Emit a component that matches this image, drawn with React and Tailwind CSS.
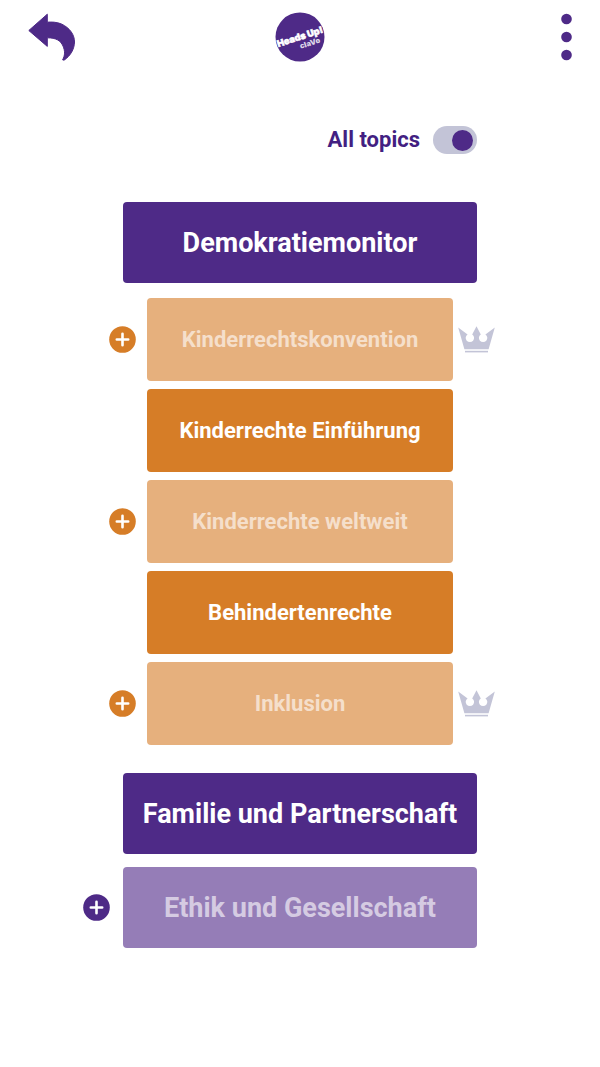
const topics = [
  {
    title: "Demokratiemonitor",
    children: [
      { title: "Kinderrechtskonvention", locked: true, premium: true },
      { title: "Kinderrechte Einführung" },
      { title: "Kinderrechte weltweit", locked: true },
      { title: "Behindertenrechte" },
      { title: "Inklusion", locked: true, premium: true },
    ],
  },
  { title: "Familie und Partnerschaft" },
  { title: "Ethik und Gesellschaft", locked: true },
];

function BackIcon() {
  return (
    <svg viewBox="0 0 48 48" className="size-12" fill="#4e2a87" aria-hidden="true">
      <path
        d="M.8 17.500 19.300 1.200V9.200C23 8.800 29 9 33.500 11 42 15 46.600 22 46.500 29 46.400 36 42.500 43 36 47.200L34.600 46.800C37 42.500 37.200 38 35 33 32.500 27.500 28 24.800 19.300 24.800V33.400Z"
        stroke="#4e2a87"
        strokeWidth="1"
        strokeLinejoin="round"
      />
    </svg>
  );
}

function Logo() {
  return (
    <svg viewBox="0 0 50 50" className="size-[50px]" role="img" aria-label="Heads Up! claVo">
      <circle cx="25" cy="25" r="24.500" fill="#4e2a87" />
      <g transform="rotate(-18 25 25)" fill="#fff" fontFamily="Inter, sans-serif" fontWeight="900">
        <text x="25" y="28" fontSize="9.300" textAnchor="middle" stroke="#fff" strokeWidth=".5">
          Heads Up!
        </text>
        <text x="32.500" y="36.500" fontSize="7.500" textAnchor="middle" fill="#dcd4e7">
          claVo
        </text>
      </g>
    </svg>
  );
}

function MenuIcon() {
  return (
    <svg viewBox="0 0 12 48" className="h-12 w-3" fill="#4e2a87" aria-hidden="true">
      <circle cx="6.500" cy="6" r="5.300" />
      <circle cx="6.500" cy="24" r="5.300" />
      <circle cx="6.500" cy="42" r="5.300" />
    </svg>
  );
}

function PlusIcon() {
  return (
    <svg viewBox="0 0 27 27" className="size-[27px]" aria-hidden="true">
      <circle cx="13.500" cy="13.500" r="13.300" fill="currentColor" />
      <path d="M13.500 7.800v11.400M7.800 13.500h11.400" stroke="#fff" strokeWidth="2.600" strokeLinecap="round" />
    </svg>
  );
}

function CrownIcon() {
  return (
    <svg viewBox="0 0 37 27" className="h-[27px] w-[37px] shrink-0" fill="#c3c4d7" role="img" aria-label="Premium">
      <path d="M.2 1.500 9.600 8.400A4.200 4.200 0 1 0 14.200 8.400L18.500.2 22.800 8.400A4.200 4.200 0 1 0 27.400 8.400L36.800 1.500 30.600 23.200H6.400Z" />
      <path d="M7 24.800h23v1.600H7z" />
    </svg>
  );
}

function AddButton({ title, className }) {
  return (
    <button type="button" aria-label={`Add ${title}`} className={`shrink-0 rounded-full ${className}`}>
      <PlusIcon />
    </button>
  );
}

function SubTopic({ title, locked, premium }) {
  return (
    <li className="grid grid-cols-[1fr_51%_1fr] items-center">
      <div className="flex justify-end pr-[11px]">
        {locked && <AddButton title={title} className="text-[#d67d27]" />}
      </div>
      <button
        type="button"
        className={`min-h-[83px] rounded-[4px] px-2 text-[22px] leading-7 font-bold ${
          locked ? "bg-[#e6b07d] text-[#f5dfcb]" : "bg-[#d67d27] text-white"
        }`}
      >
        {title}
      </button>
      <div className="pl-[5px]">{premium && <CrownIcon />}</div>
    </li>
  );
}

function Topic({ title, locked, children }) {
  return (
    <li>
      <div className="grid grid-cols-[1fr_59%_1fr] items-center">
        <div className="flex justify-end pr-[13px]">
          {locked && <AddButton title={title} className="text-[#4e2a87]" />}
        </div>
        <button
          type="button"
          className={`min-h-[81px] rounded-[4px] px-2 text-[27px] leading-8 font-bold ${
            locked ? "bg-[#957db7] text-[#d5cbe2]" : "bg-[#4e2a87] text-white"
          }`}
        >
          {title}
        </button>
      </div>
      {children && (
        <ul className="my-[15px] flex flex-col gap-2">
          {children.map((child) => (
            <SubTopic key={child.title} {...child} />
          ))}
        </ul>
      )}
    </li>
  );
}

export default function App() {
  return (
    <div className="min-h-screen bg-white font-[Roboto,sans-serif]">
      <header className="grid grid-cols-3 items-center px-7 pt-3">
        <button type="button" aria-label="Back" className="justify-self-start">
          <BackIcon />
        </button>
        <div className="justify-self-center">
          <Logo />
        </div>
        <button type="button" aria-label="Menu" className="justify-self-end">
          <MenuIcon />
        </button>
      </header>
      <main>
        <div className="mx-auto mt-16 flex w-[59%] items-center justify-end gap-[13px]">
          <label htmlFor="all-topics" className="text-[22px] leading-7 font-bold text-[#431f82]">
            All topics
          </label>
          <input
            id="all-topics"
            type="checkbox"
            role="switch"
            defaultChecked
            className="flex h-7 w-11 appearance-none items-center rounded-full bg-[#c3c4d7] px-1 before:size-[21px] before:rounded-full before:bg-[#4e2a87] checked:justify-end"
          />
        </div>
        <ul className="mt-12 flex flex-col gap-[13px]">
          {topics.map((topic) => (
            <Topic key={topic.title} {...topic} />
          ))}
        </ul>
      </main>
    </div>
  );
}
